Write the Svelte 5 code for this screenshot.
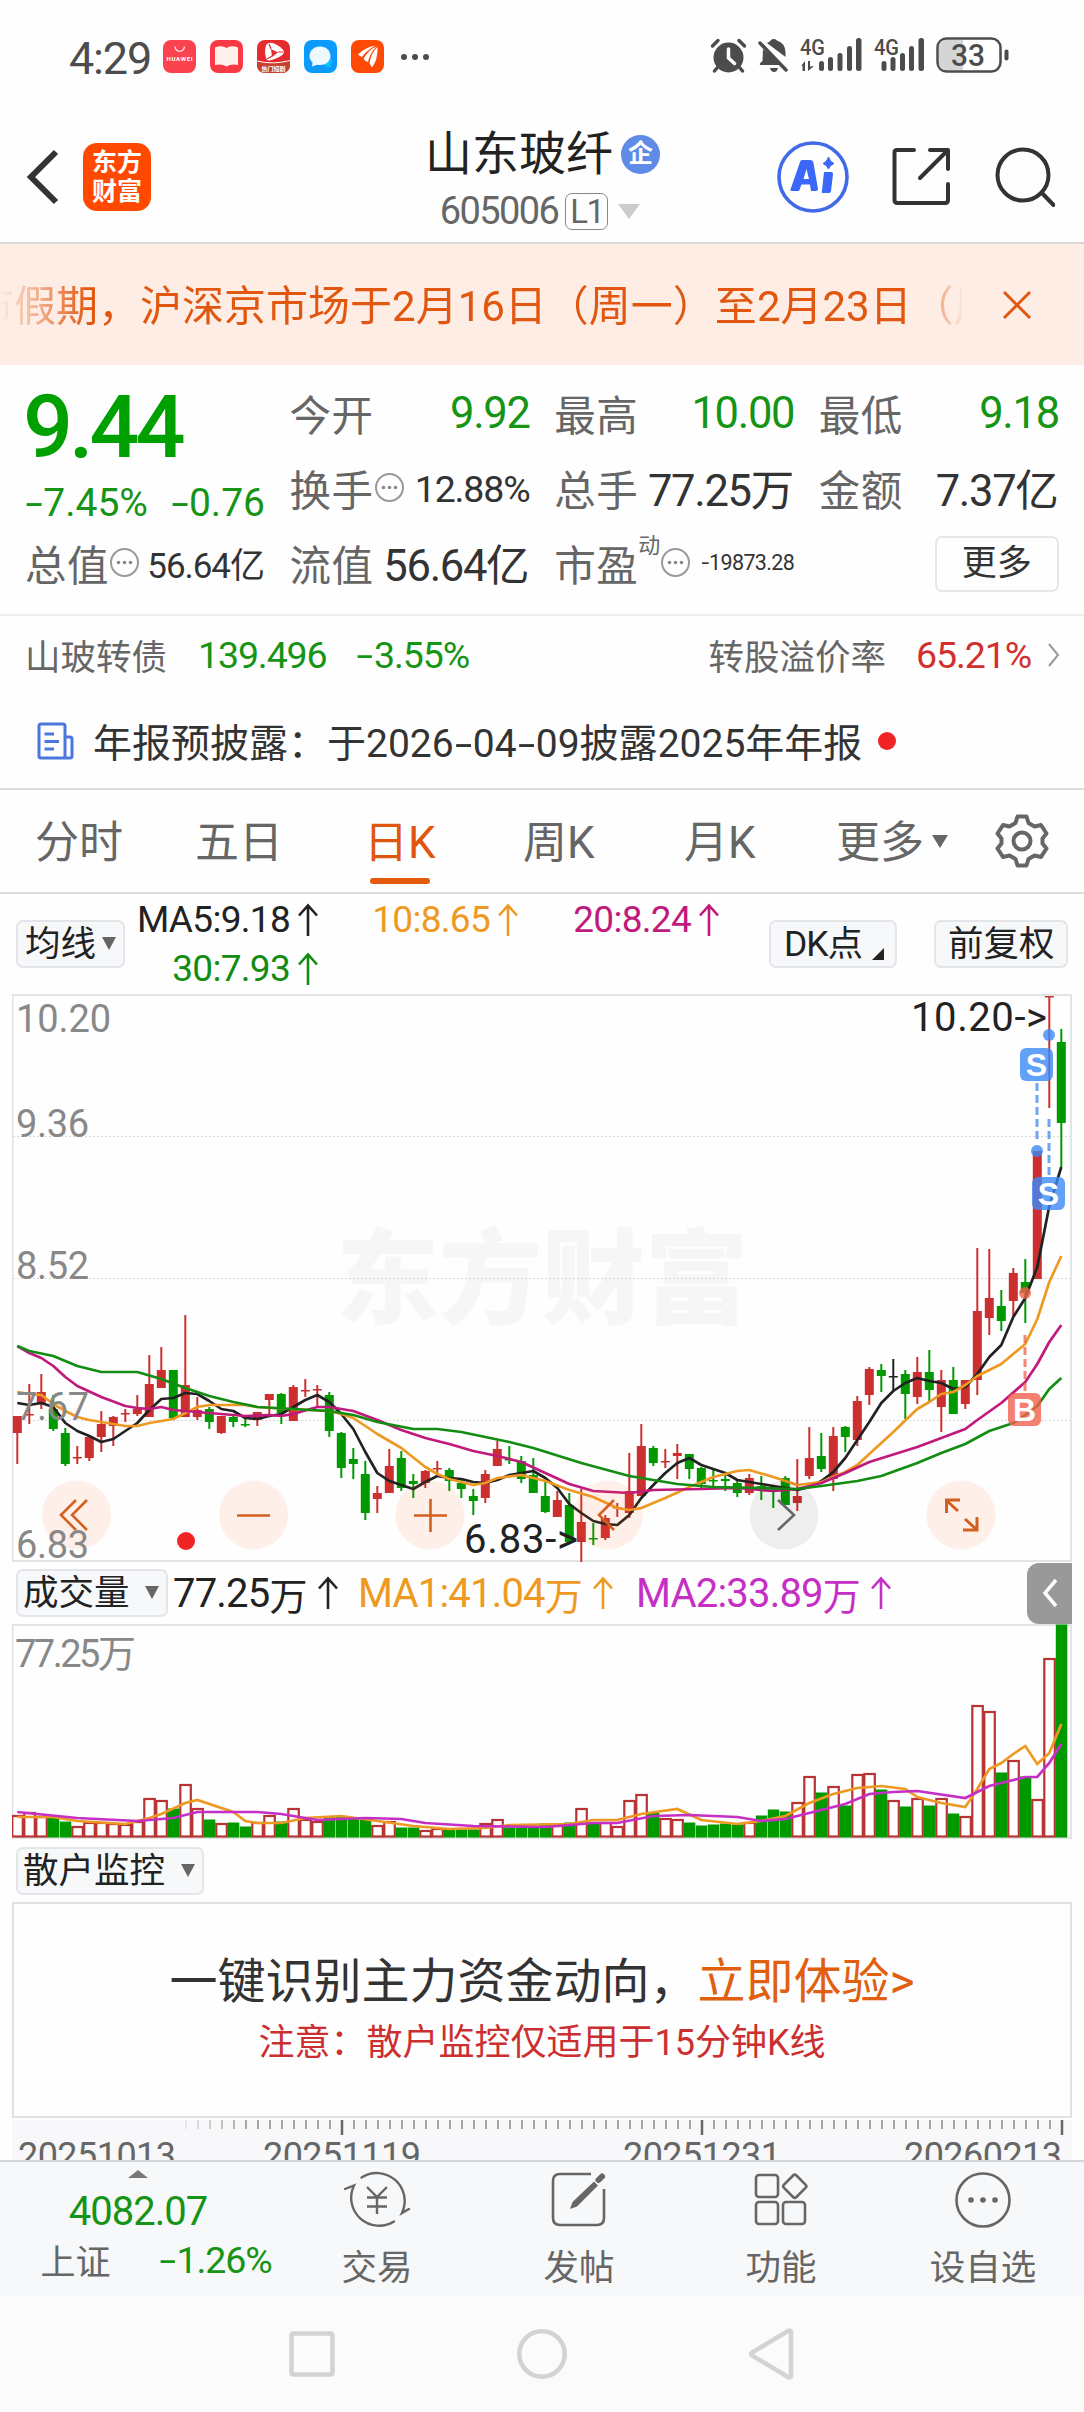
<script lang="ts">
  type Candle = [string, number, number, number, number, number];
  type Point = [number, number];

  const COLORS: Record<string, string> = { r: '#cc2f2f', g: '#009a00', k: '#222' };

  // colour, high, body top, body bottom, low, volume (all in chart pixels)
  const candles: Candle[] = [
    ['r', 422, 422, 439, 470, 22], ['r', 390, 420, 421, 430, 25], ['r', 380, 398, 409, 415, 21], ['g', 401, 415, 435, 437, 20],
    ['g', 434, 439, 470, 472, 16], ['r', 452, 463, 464, 470, 11], ['r', 443, 443, 464, 467, 15], ['r', 417, 430, 443, 458, 15],
    ['r', 422, 423, 432, 452, 14], ['r', 415, 419, 420, 428, 13], ['r', 401, 415, 420, 422, 16], ['r', 361, 390, 423, 423, 39],
    ['r', 353, 376, 394, 394, 37], ['g', 376, 376, 424, 424, 29], ['r', 321, 391, 423, 423, 53], ['r', 403, 416, 423, 426, 29],
    ['g', 413, 415, 428, 435, 18], ['r', 422, 422, 439, 440, 14], ['g', 422, 423, 428, 433, 15], ['g', 425, 430, 431, 433, 11],
    ['r', 418, 418, 426, 432, 15], ['r', 400, 400, 406, 422, 22], ['g', 399, 400, 419, 430, 16], ['r', 391, 393, 427, 427, 29],
    ['r', 385, 396, 397, 403, 18], ['r', 391, 395, 396, 413, 16], ['g', 398, 401, 437, 443, 21], ['g', 438, 439, 474, 484, 21],
    ['g', 454, 465, 470, 485, 19], ['g', 467, 480, 519, 526, 19], ['r', 492, 499, 505, 519, 12], ['r', 455, 472, 499, 499, 16],
    ['g', 457, 464, 494, 497, 10], ['g', 480, 487, 490, 504, 10], ['r', 476, 477, 489, 494, 7], ['r', 467, 474, 475, 479, 9],
    ['g', 474, 476, 487, 497, 9], ['g', 486, 489, 495, 504, 8], ['g', 495, 502, 507, 521, 8], ['r', 476, 480, 504, 509, 14],
    ['r', 447, 455, 472, 472, 18], ['g', 452, 465, 466, 470, 10], ['g', 462, 467, 485, 489, 10], ['g', 464, 481, 499, 499, 10],
    ['g', 486, 502, 518, 519, 14], ['r', 497, 506, 523, 523, 12], ['g', 499, 511, 548, 548, 15], ['r', 495, 528, 548, 568, 29],
    ['g', 529, 544, 545, 551, 14], ['r', 521, 524, 544, 546, 15], ['r', 509, 513, 514, 523, 11], ['r', 459, 497, 519, 524, 37],
    ['r', 430, 452, 502, 502, 43], ['g', 452, 454, 469, 472, 25], ['r', 455, 467, 468, 474, 19], ['r', 450, 459, 462, 485, 18],
    ['g', 460, 460, 475, 485, 15], ['g', 473, 474, 490, 495, 12], ['g', 474, 486, 487, 495, 13], ['g', 480, 485, 487, 497, 14],
    ['g', 486, 489, 499, 503, 13], ['r', 480, 484, 499, 501, 15], ['g', 482, 492, 493, 506, 22], ['g', 491, 493, 494, 514, 28],
    ['g', 482, 484, 511, 511, 26], ['r', 465, 502, 509, 517, 35], ['r', 433, 464, 482, 485, 61], ['g', 439, 462, 475, 478, 45],
    ['r', 433, 442, 485, 497, 51], ['g', 432, 433, 443, 458, 32], ['r', 402, 407, 446, 452, 63], ['r', 373, 375, 401, 411, 64],
    ['g', 370, 376, 382, 398, 48], ['k', 365, 382, 383, 397, 37], ['g', 376, 380, 400, 425, 31], ['r', 363, 378, 403, 410, 39],
    ['g', 356, 378, 396, 407, 32], ['r', 376, 386, 413, 438, 39], ['g', 373, 386, 420, 420, 24], ['r', 386, 386, 410, 415, 21],
    ['r', 254, 317, 386, 401, 132], ['r', 255, 304, 324, 341, 126], ['g', 296, 312, 327, 337, 65], ['r', 274, 279, 307, 322, 77],
    ['g', 265, 288, 299, 329, 61], ['r', 157, 157, 285, 285, 38], ['r', 2, 2, 3, 114, 179], ['g', 35, 48, 129, 173, 213],
  ];

  const ma5 = [
    409, 411, 409, 413, 429, 437, 442, 448, 445, 437, 429, 416, 405, 404, 399, 400, 407, 415, 417, 424, 425, 422,
    420, 413, 406, 401, 408, 420, 435, 458, 479, 487, 491, 495, 488, 482, 484, 485, 488, 489, 486, 481, 479, 477,
    484, 494, 510, 519, 527, 530, 531, 521, 504, 491, 479, 469, 464, 471, 475, 479, 486, 488, 490, 492, 494, 496,
    493, 487, 478, 464, 446, 428, 409, 397, 389, 384, 387, 389, 395, 393, 380, 363, 351, 323, 304, 273, 212, 173,
  ].map((y, i): Point => [i, y]);
  const ma10: Point[] = [
    [0, 398], [1, 400], [2, 401], [3, 410], [4, 417], [5, 423], [6, 426], [8, 430], [9, 432], [10, 432], [11, 429], [13, 425],
    [14, 419], [15, 413], [16, 411], [19, 411], [20, 413], [24, 416], [26, 417], [27, 420], [28, 424], [30, 440], [32, 454],
    [34, 473], [35, 480], [36, 485], [38, 491], [39, 489], [40, 484], [42, 481], [44, 487], [46, 496], [48, 503], [50, 514],
    [51, 516], [52, 514], [54, 504], [56, 493], [58, 483], [60, 477], [61, 476], [63, 483], [65, 491], [67, 488], [69, 478],
    [70, 471], [71, 460], [73, 438], [75, 415], [76, 408], [77, 400], [78, 398], [79, 391], [80, 382], [82, 370], [84, 350],
    [85, 325], [86, 288], [87, 262],
  ];
  const ma20: Point[] = [
    [0, 352], [1, 359], [2, 364], [3, 372], [4, 383], [5, 392], [7, 403], [9, 412], [10, 414], [11, 415], [12, 413], [13, 416],
    [17, 420], [19, 422], [21, 421], [22, 422], [23, 420], [25, 413], [26, 413], [28, 417], [30, 426], [32, 436], [34, 444],
    [36, 450], [38, 457], [40, 462], [42, 468], [44, 479], [46, 490], [48, 497], [51, 499], [53, 496], [57, 495], [60, 494],
    [63, 497], [65, 495], [67, 489], [69, 479], [71, 468], [75, 453], [77, 444], [79, 435], [80, 426], [82, 409], [84, 388],
    [85, 370], [86, 348], [87, 331],
  ];
  const ma30: Point[] = [
    [0, 352], [1, 357], [3, 362], [5, 372], [7, 378], [10, 378], [12, 385], [14, 394], [16, 402], [18, 408], [20, 413], [23, 415],
    [26, 417], [28, 421], [30, 428], [33, 435], [35, 435], [37, 438], [39, 443], [41, 448], [43, 454], [47, 469], [51, 482],
    [55, 490], [58, 493], [65, 495], [67, 492], [70, 487], [72, 482], [75, 469], [77, 459], [79, 450], [81, 437], [83, 429],
    [84, 421], [85, 412], [86, 395], [87, 384],
  ];
  const volMa1: Point[] = [
    [0, 193], [3, 193], [5, 197], [9, 200], [11, 194], [12, 190], [14, 179], [15, 176], [18, 188], [19, 197], [20, 199], [22, 199],
    [24, 194], [27, 192], [30, 197], [33, 202], [36, 205], [39, 204], [41, 201], [46, 200], [48, 196], [50, 196], [52, 190],
    [55, 185], [57, 196], [60, 200], [62, 197], [64, 192], [66, 179], [68, 170], [70, 164], [72, 162], [74, 165], [75, 173],
    [77, 179], [79, 183], [80, 165], [81, 145], [82, 139], [83, 130], [84, 122], [85, 140], [86, 129], [87, 100],
  ];
  const volMa2: Point[] = [
    [0, 188], [5, 194], [10, 197], [13, 194], [15, 188], [20, 188], [22, 190], [25, 196], [29, 194], [32, 195], [34, 199],
    [38, 202], [44, 203], [48, 199], [50, 199], [53, 192], [56, 191], [60, 193], [62, 197], [64, 195], [66, 189], [69, 180],
    [71, 170], [73, 168], [75, 167], [79, 174], [81, 162], [82, 159], [84, 153], [85, 153], [86, 139], [87, 120],
  ];

  const cx = (i: number) => 5.3 + i * 12;
  const line = (pts: Point[]) => pts.map(([i, y]) => `${cx(i)},${y}`).join(' ');

  const axis = [
    { label: '10.20', y: 38, w: 95 },
    { label: '9.36', y: 143, w: 73 },
    { label: '8.52', y: 285, w: 73 },
    { label: '7.67', y: 426, w: 73 },
    { label: '6.83', y: 564, w: 73 },
  ];
  const marks = [
    { t: 'S', x: 1008, y: 54, c: '#3c8af7', dotX: 1037, dotY: 41, dx: 1025, d1: 89, d2: 147 },
    { t: 'S', x: 1020, y: 183, c: '#3c8af7', dotX: 1025, dotY: 157, dx: 1037, d1: 125, d2: 183 },
    { t: 'B', x: 996, y: 399, c: '#f0604c', dotX: 1013, dotY: 299, dx: 1013, d1: 341, d2: 398 },
  ];
  const ticks = Array.from({ length: 74 }, (_, k) => 174 + k * 12);
  const tabs = [
    { label: '分时', x: 35 }, { label: '五日', x: 195 }, { label: '日K', x: 364 },
    { label: '周K', x: 523 }, { label: '月K', x: 684 }, { label: '更多', x: 836 },
  ];
  let active = $state('日K');

  // digits and hyphens get their own spacing next to Chinese text
  const split = (s: string) => s.split(/(-|[0-9A-Z.:%+]+)/).filter(Boolean);
  const isNum = (s: string) => /^[0-9A-Z.:%+]/.test(s);
</script>

{#snippet mix(s: string)}{#each split(s) as part}{#if part === '-'}<span class="hy">-</span>{:else if isNum(part)}<span class="num">{part}</span>{:else}{part}{/if}{/each}{/snippet}

{#snippet info()}
  <svg class="info" width="32" height="32" viewBox="0 0 32 32">
    <circle cx="15.500" cy="14.500" r="13.500" fill="none" stroke="#999" stroke-width="2" />
    <circle cx="9.500" cy="14.500" r="1.800" fill="#888" /><circle cx="15.500" cy="14.500" r="1.800" fill="#888" /><circle cx="21.500" cy="14.500" r="1.800" fill="#888" />
  </svg>
{/snippet}

{#snippet up()}<svg class="up" width="20" height="34" viewBox="0 0 20 34"><path d="M10 33V3M1 12.5L10 2.5L19 12.5" fill="none" stroke="currentColor" stroke-width="2.6" /></svg>{/snippet}

<div class="phone">
  <div class="status">
    <span class="clock">4:29</span>
    <div class="apps">
      <svg width="33" height="33" viewBox="0 0 33 33">
        <rect width="33" height="33" rx="8" fill="#fb4350" />
        <path d="M12 6.5a4.7 4.7 0 0 0 9.4 0" fill="none" stroke="#fff" stroke-width="1.1" />
        <text x="16.5" y="21" font-size="6" font-weight="700" fill="#fff" text-anchor="middle" textLength="26">HUAWEI</text>
      </svg>
      <svg width="33" height="33" viewBox="0 0 33 33">
        <rect width="33" height="33" rx="8" fill="#f93a44" />
        <path d="M5 7.5Q12 5 16.5 8Q21 5 28 7.5V25Q21 23.500 16.500 26.500Q12 23.500 5 25Z" fill="#fff2ec" />
      </svg>
      <svg width="33" height="33" viewBox="0 0 33 33">
        <rect width="33" height="33" rx="8" fill="#e62b2f" />
        <path d="M9 5Q12 1.500 17 3.500Q25 7 27 11.500Q27 15 20 18Q12 22 9.500 19.500Q7 13 9 5Z" fill="#fff" />
        <path d="M14 9L21 12.500L15 17Z" fill="#e62b2f" /><path d="M12 4L14 9M26 12H21M10 19L15 16" stroke="#e62b2f" stroke-width="1.2" />
        <path d="M0 21.500Q16 25 33 21V26Q32 33 25 33H8Q1 33 0 26Z" fill="#c9402f" /><path d="M0 21Q16 25 33 20.500" fill="none" stroke="#fff" stroke-width="1" />
        <text x="16.500" y="30.500" font-size="6" font-weight="700" fill="#fff" text-anchor="middle">热门短剧</text>
      </svg>
      <svg width="33" height="33" viewBox="0 0 33 33">
        <rect width="33" height="33" rx="8" fill="#0c9bfb" />
        <path d="M19 23Q24 24 28 18Q28 23 26 24L27 27Q22 28 19 23Z" fill="#00c9f7" />
        <path d="M16 6.500C9.500 6.500 5.500 11 5.500 16C5.500 19 7 21 8.500 22.500L8 26.500L13 24.700C21 26.500 26.500 21.500 26.500 16C26.500 10.500 22 6.500 16 6.500Z" fill="#eef8ff" />
      </svg>
      <svg width="33" height="33" viewBox="0 0 33 33">
        <rect width="33" height="33" rx="8" fill="#ff4a05" />
        <path d="M7 14.500Q16 6 24 6Q16 10 11 17Q9 16 7 14.500ZM12.500 19Q17 10 25.500 6.500Q19 13 17 22Q14 21 12.500 19ZM18.500 23Q20 13 26.500 7Q27 20 21 27.500Q20 26 18.500 23Z" fill="#fff" />
      </svg>
    </div>
    <span class="dots"><i></i><i></i><i></i></span>
    <svg class="sys" width="302" height="40" viewBox="0 0 302 40">
      <g fill="#4c4c4c">
        <circle cx="18.500" cy="20.500" r="15" />
        <path d="M2.500 9L8 3.500M34.500 9L29 3.500M7 31L4.500 34M30 31L32.500 34" stroke="#4c4c4c" stroke-width="3.500" stroke-linecap="round" />
        <path d="M18.500 12V21L24.500 26.500" fill="none" stroke="#fff" stroke-width="3.500" stroke-linecap="round" />
        <path d="M57 6Q60 5 61 3Q64 1 67 3.500Q75 6 75.500 15V20ZM53 12L72 28H50Q49 26.500 52.500 24Z" />
        <path d="M50 6L76 33" stroke="#4c4c4c" stroke-width="3.500" stroke-linecap="round" />
        <path d="M60 31H68Q67 35 64 35Q61 35 60 31Z" />
        <rect x="109" y="24" width="5" height="10" rx="2.500" /><rect x="118" y="20" width="5" height="14" rx="2.500" /><rect x="127.500" y="16" width="5" height="18" rx="2.500" /><rect x="137" y="9" width="5" height="25" rx="2.500" /><rect x="146" y="1" width="5.500" height="33" rx="2.500" />
        <rect x="171.500" y="24" width="5" height="10" rx="2.500" /><rect x="180.500" y="20" width="5" height="14" rx="2.500" /><rect x="190" y="16" width="5" height="18" rx="2.500" /><rect x="199" y="9" width="5" height="25" rx="2.500" /><rect x="208.500" y="1" width="5.500" height="33" rx="2.500" />
        <path d="M91 29L95 24V34H92.500V28.500ZM98 24H100V29.500L104 29L98 34Z" />
        <text x="90" y="17.500" font-size="22" font-weight="500" textLength="25" lengthAdjust="spacingAndGlyphs">4G</text>
        <text x="164" y="17.500" font-size="22" font-weight="500" textLength="25" lengthAdjust="spacingAndGlyphs">4G</text>
        <rect x="227.500" y="1.500" width="63" height="33" rx="9" fill="#fff" stroke="#4c4c4c" stroke-width="2.500" />
        <path d="M229 10Q229 3 236 3H253V33H236Q229 33 229 26Z" fill="#d5d5d5" />
        <text x="241" y="29" font-size="32" font-weight="500" textLength="34" lengthAdjust="spacingAndGlyphs">33</text>
        <rect x="294.500" y="12.500" width="4" height="11" rx="2" />
      </g>
    </svg>
  </div>

  <header>
    <div class="left">
      <svg width="34" height="58" viewBox="0 0 34 58"><path d="M30 4L5 29L30 54" fill="none" stroke="#333" stroke-width="6" /></svg>
      <div class="logo"><span>东方</span><span>财富</span></div>
    </div>
    <div class="title">
      <div class="name">山东玻纤<span class="ent">企</span></div>
      <div class="code"><span>605006</span><b>L1</b><i></i></div>
    </div>
    <div class="tools">
      <svg width="72" height="72" viewBox="0 0 72 72">
        <circle cx="36" cy="36" r="34" fill="none" stroke="#4169e8" stroke-width="3.600" />
        <path d="M25 19H33Q36 19 36.500 22L41 48Q41 50 39 50H34L33 43.500H24.500L22 50H14.500Q12.500 49.500 14 47L23 21Q23.500 19 25 19ZM29.500 28L26.500 38H32Z" fill="#3b68fa" fill-rule="evenodd" />
        <path d="M47 31H54.500Q56 31 56 33L54 50Q54 52 52 52H45Q44.500 51 45 49.500Z" fill="#3b68fa" />
        <path d="M51.500 16Q53 21 57 22.500Q53 24 51.500 28Q50 24 46 22.500Q50 21 51.500 16Z" fill="#3b68fa" stroke="#3b68fa" />
      </svg>
      <svg width="60" height="60" viewBox="0 0 60 60" fill="none" stroke="#333" stroke-width="4" stroke-linecap="round" stroke-linejoin="round">
        <path d="M22 3H5Q2.500 3 2.500 5.500V53Q2.500 56 5.500 56H53Q56 56 56 53V37M38 3H56V22M56 3L28 31" />
      </svg>
      <svg width="60" height="60" viewBox="0 0 60 60" fill="none" stroke="#333" stroke-width="4" stroke-linecap="round">
        <circle cx="28" cy="28" r="25.500" /><path d="M47 46L58.500 58" />
      </svg>
    </div>
  </header>

  <div class="banner">
    <div class="marquee"><div class="run">市假期，沪深京市场于{@render mix('2月16日（周一）至2月23日（周一）')}</div></div>
    <svg width="30" height="30" viewBox="0 0 30 30"><path d="M2 2L28 28M28 2L2 28" stroke="#e2570f" stroke-width="3" /></svg>
  </div>

  <section class="quote">
    <div class="price">
      <div class="last">9.44</div>
      <div class="chg"><span>{@render mix('-7.45%')}</span><span>{@render mix('-0.76')}</span></div>
    </div>
    <div class="cell"><label>今开</label><b class="num g">9.92</b></div>
    <div class="cell"><label>最高</label><b class="num g">10.00</b></div>
    <div class="cell"><label>最低</label><b class="num g">9.18</b></div>
    <div class="cell"><label>换手</label>{@render info()}<b class="num m">12.88%</b></div>
    <div class="cell"><label>总手</label><b>{@render mix('77.25万')}</b></div>
    <div class="cell"><label>金额</label><b>{@render mix('7.37亿')}</b></div>
    <div class="cell"><label>总值</label>{@render info()}<b class="s">{@render mix('56.64亿')}</b></div>
    <div class="cell"><label>流值</label><b>{@render mix('56.64亿')}</b></div>
    <div class="cell"><label>市盈</label><sup>动</sup>{@render info()}<b class="xs">{@render mix('-19873.28')}</b></div>
    <div class="cell end"><button class="more">更多</button></div>
  </section>

  <section class="bond">
    <span class="lbl">山玻转债</span><span class="num g v1">139.496</span><span class="g v2">{@render mix('-3.55%')}</span>
    <span class="lbl prem">转股溢价率</span><span class="num red v3">65.21%</span>
    <svg width="14" height="26" viewBox="0 0 14 26"><path d="M2 2L11 13L2 24" fill="none" stroke="#999" stroke-width="2" /></svg>
  </section>

  <section class="notice">
    <svg width="38" height="38" viewBox="0 0 38 38" fill="none" stroke="#4a76dd" stroke-width="3">
      <path d="M28 36V4Q28 2 26 2H4Q2 2 2 4V34Q2 36 4 36H33Q35 36 35 34V17Q35 15 33 15H28M7.500 12H17M7.500 19.500H22M7.500 27H17" />
    </svg>
    <span class="txt">{@render mix('年报预披露：于2026-04-09披露2025年年报')}</span>
    <i></i>
  </section>

  <nav class="tabs">
    {#each tabs as t, i}
      <button class:on={active === t.label} style:margin-left="{i === 0 ? t.x : 0}px" style:width="{(tabs[i + 1]?.x ?? 994) - t.x}px" onclick={() => (active = t.label)}>
        <span>{t.label}</span>{#if i === 5}<i class="tri"></i>{/if}
      </button>
    {/each}
    <svg width="56" height="56" viewBox="0 0 56 56" fill="none" stroke="#666" stroke-width="4" stroke-linejoin="round">
      <path d="M23.500 3.500H32.500L34.500 10L40.500 13.500L47 12L52.500 20.500L48.500 25.500V30.500L52.500 35.500L47 44L40.500 42.500L34.500 46L32.500 52.500H23.500L21.500 46L15.500 42.500L9 44L3.500 35.500L7.500 30.500V25.500L3.500 20.500L9 12L15.500 13.500L21.500 10Z" />
      <circle cx="28" cy="28" r="8.500" />
    </svg>
  </nav>

  <section class="mabar">
    <button class="chip ma">均线<i class="tri"></i></button>
    <div class="mas">
      <span class="m1">MA5:9.18{@render up()}</span>
      <span class="m2">10:8.65{@render up()}</span>
      <span class="m3">20:8.24{@render up()}</span>
      <span class="m4">30:7.93{@render up()}</span>
    </div>
    <button class="chip dk">{@render mix('DK点')}<i class="corner"></i></button>
    <button class="chip fq">前复权</button>
  </section>

  <svg class="chart" width="1060" height="568" viewBox="0 0 1060 568">
    <text class="mark" x="530" y="322" text-anchor="middle">东方财富</text>
    <rect x="0.500" y="1" width="1058.500" height="566" fill="none" stroke="#e2e2e2" stroke-width="1.800" />
    {#each [142.5, 284.5, 426.5] as y}
      <line x1="1" x2="1058" y1={y} y2={y} stroke="#d8d8d8" stroke-width="1" stroke-dasharray="2 2" />
    {/each}
    {#each candles as [c, hi, top, bot, lo], i}
      <line x1={cx(i)} x2={cx(i)} y1={hi} y2={lo} stroke={COLORS[c]} stroke-width="2" />
      <rect x={cx(i) - 4.5} y={top} width="9" height={Math.max(bot - top, 1.5)} fill={COLORS[c]} />
    {/each}
    <g fill="none" stroke-width="2.700" stroke-linejoin="round">
      <polyline points={line(ma5)} stroke="#222" />
      <polyline points={line(ma10)} stroke="#ee9a22" />
      <polyline points={line(ma20)} stroke="#c01a7c" />
      <polyline points={line(ma30)} stroke="#128c12" />
    </g>
    {#each [64.5, 241.6, 418, 596, 772, 949] as x, i}
      <circle cx={x} cy="521" r="34.500" fill={i === 4 ? '#00000010' : '#ff6a2018'} />
    {/each}
    <g fill="none" stroke="#d4601f" stroke-width="2.600">
      <path d="M64 506L49 521L64 536M75 506L60 521L75 536" />
      <path d="M225 521.500H258" /><path d="M402 521.500H435M418.500 505V538" />
      <path d="M602 506L587 521L602 536" />
      <path d="M766 506L782 521L766 536" stroke="#666" />
      <path d="M934.500 519V506H948M935 507L946 517M965 523V536H951M964 535L953 525" stroke-width="3" />
    </g>
    <circle cx="174" cy="547" r="9" fill="#f02424" />
    {#each axis as a}
      <text x="4" y={a.y} class="ax" textLength={a.w}>{a.label}</text>
    {/each}
    <text x="899" y="37" class="tag" textLength="136">10.20-&gt;</text>
    <text x="452" y="559" class="tag" textLength="114">6.83-&gt;</text>
    {#each marks as m}
      <line x1={m.dx} x2={m.dx} y1={m.d1} y2={m.d2} stroke={m.c} stroke-width="3" stroke-dasharray="8 4" opacity="0.75" />
      <circle cx={m.dotX} cy={m.dotY} r="6" fill={m.c} opacity="0.8" />
      <rect x={m.x} y={m.y} width="33" height="33" rx="6" fill={m.c} opacity="0.8" />
      <text x={m.x + 16.5} y={m.y + 28} class="sb" text-anchor="middle">{m.t}</text>
    {/each}
  </svg>

  <section class="volbar">
    <button class="chip vol">成交量<i class="tri"></i></button>
    <span class="v0">{@render mix('77.25万')}{@render up()}</span>
    <span class="va">{@render mix('MA1:41.04万')}{@render up()}</span>
    <span class="vb">{@render mix('MA2:33.89万')}{@render up()}</span>
    <button class="fold" aria-label="收起">
      <svg width="18" height="30" viewBox="0 0 18 30"><path d="M15 2L4 15L15 28" fill="none" stroke="#fff" stroke-width="3.500" /></svg>
    </button>
  </section>

  <svg class="chart" width="1060" height="215" viewBox="0 0 1060 215">
    <rect x="0.500" y="1" width="1058.500" height="213" fill="none" stroke="#e2e2e2" stroke-width="1.800" />
    <text x="3" y="43" class="ax" textLength="121">77.25万</text>
    {#each candles as [c, , , , , v], i}
      {#if c === 'g'}
        <rect x={cx(i) - 5.5} y={213.5 - v} width="11.500" height={v} fill="#009a00" />
      {:else}
        <rect x={cx(i) - 5} y={214 - v} width="10.500" height={v - 1.5} fill="#fff" stroke="#b83434" stroke-width="2.200" />
      {/if}
    {/each}
    <polyline points={line(volMa1)} fill="none" stroke="#ee9a22" stroke-width="2.700" />
    <polyline points={line(volMa2)} fill="none" stroke="#c62fc6" stroke-width="2.700" />
  </svg>

  <section class="monitor"><button class="chip mon">散户监控<i class="tri"></i></button></section>

  <section class="promo">
    <p class="lead">一键识别主力资金动向，<a href="#try">立即体验&gt;</a></p>
    <p class="warn">{@render mix('注意：散户监控仅适用于15分钟K线')}</p>
  </section>

  <div class="ruler">
    <svg width="1060" height="40" viewBox="0 0 1060 40">
      {#each ticks as x, k}
        {@const big = (x - 330) % 360 === 0}
        <line x1={x} x2={x} y1="0" y2={big ? 15 : 9} stroke={big ? '#666' : '#888'} stroke-width={big ? 2.5 : 1.5} opacity={Math.min(1, 0.2 + k * 0.15)} />
      {/each}
      <text x="6" y="48" textLength="158">20251013</text>
      <text x="251" y="48" textLength="158">20251119</text>
      <text x="611" y="48" textLength="158">20251231</text>
      <text x="892" y="48" textLength="158">20260213</text>
    </svg>
  </div>

  <footer>
    <div class="index">
      <i></i>
      <b>4082.07</b>
      <div><span>上证</span><em>{@render mix('-1.26%')}</em></div>
    </div>
    <div class="item">
      <svg width="68" height="60" viewBox="0 0 68 60" fill="none" stroke="#666" stroke-width="2.400" stroke-linecap="round">
        <path d="M18.500 7.500A28 28 0 0 1 59 43L66 39M2 19L11 15.500A28 28 0 0 0 51 51.500" />
        <path d="M24 17L34 27L44 17M24 27.500H44M24 36.500H44M34 27V44" stroke-linecap="butt" />
      </svg>
      <span>交易</span>
    </div>
    <div class="item">
      <svg width="60" height="60" viewBox="0 0 60 60" fill="none" stroke="#666" stroke-width="2.600">
        <path d="M42 4H11Q4 4 4 11V48Q4 55 11 55H48Q55 55 55 48V19" />
        <path d="M21 39L23.500 32L45 11.500L49 15.500L28 36.500Z" fill="#666" stroke="none" /><path d="M49.500 10L53 6.500" stroke-width="6" stroke-linecap="round" />
      </svg>
      <span>发帖</span>
    </div>
    <div class="item">
      <svg width="60" height="60" viewBox="0 0 60 60" fill="none" stroke="#666" stroke-width="2.600">
        <rect x="5" y="5" width="22" height="22" rx="3" /><rect x="5" y="32" width="22" height="22" rx="3" /><rect x="32" y="32" width="22" height="22" rx="3" />
        <rect x="35" y="7.500" width="17.500" height="17.500" rx="2" transform="rotate(45 43.750 16.250)" />
      </svg>
      <span>功能</span>
    </div>
    <div class="item">
      <svg width="60" height="60" viewBox="0 0 60 60">
        <circle cx="30" cy="30" r="26.500" fill="none" stroke="#666" stroke-width="2.600" />
        <circle cx="18" cy="30" r="2.800" fill="#666" /><circle cx="30" cy="30" r="2.800" fill="#666" /><circle cx="42" cy="30" r="2.800" fill="#666" />
      </svg>
      <span>设自选</span>
    </div>
  </footer>

  <div class="sysnav">
    <svg width="50" height="50" viewBox="0 0 50 50"><rect x="4.500" y="4.500" width="41" height="41" rx="2" /></svg>
    <svg width="50" height="50" viewBox="0 0 50 50"><circle cx="25" cy="25" r="22.700" /></svg>
    <svg width="50" height="54" viewBox="0 0 50 54"><path d="M44 4.500V49.500Q43 51 41 50L5 28.500Q3 27 5 25.500L41 4Q43 3 44 4.500Z" /></svg>
  </div>
</div>

<style>
  :global(body) { background: #fdfdfe; }
  .phone {
    width: 1084px; height: 2412px; overflow: hidden;
    display: flex; flex-direction: column;
    background: #fefefe; color: #333;
    font-family: Roboto, 'Noto Sans CJK SC', sans-serif;
  }
  .phone > * { flex-shrink: 0; box-sizing: border-box; }
  button { font: inherit; color: inherit; background: none; border: none; padding: 0; }
  svg { display: block; }
  b, em, i { font-weight: 400; font-style: normal; }
  .num { letter-spacing: -.03em; }
  .hy { display: inline-block; width: .47em; text-align: center; transform: scaleX(1.6); }
  .g { color: #159415 !important; }
  .red { color: #d32f2f; }

  .status { height: 112px; display: flex; align-items: center; padding: 1px 72px 0 69px; }
  .status svg { overflow: visible; }
  .clock { font-size: 45px; letter-spacing: -1.2px; width: 94px; color: #4c4c4c; line-height: 1; padding-top: 3px; box-sizing: border-box; }
  .apps { display: flex; gap: 14px; }
  .dots { display: flex; gap: 5px; margin-left: 17px; }
  .dots i { width: 6px; height: 6px; border-radius: 50%; background: #4c4c4c; }
  .sys { margin-left: auto; }

  header {
    height: 132px; padding: 0 29px 0 26px; border-bottom: 2px solid #d8d8dc;
    display: grid; grid-template-columns: 1fr 300px 1fr; align-items: center;
  }
  .left { display: flex; align-items: center; gap: 23px; }
  .logo {
    width: 68px; height: 68px; border-radius: 14px; background: #ff4800; color: #fff;
    display: flex; flex-direction: column; align-items: center; justify-content: center;
    font-size: 25px; line-height: 29px; font-weight: 700;
  }
  .title { display: flex; flex-direction: column; align-items: center; margin-top: 1px; }
  .name { display: flex; align-items: center; font-size: 47px; line-height: 66px; color: #222; margin-left: 4px; }
  .ent {
    width: 39px; height: 39px; border-radius: 50%; margin-left: 8px;
    background: #5f8be6; color: #fff; font-size: 25px; line-height: 37px; font-weight: 700; text-align: center;
  }
  .code { display: flex; align-items: center; font-size: 38px; line-height: 46px; color: #666; letter-spacing: -1.600px; margin: 1px 1px 0 0; }
  .code b { border: 1.500px solid #888; border-radius: 7px; height: 35px; line-height: 35px; font-size: 33px; padding: 0 4px 0 4px; margin-left: 7px; }
  .code i { border: 11px solid transparent; border-top: 15px solid #ccc; border-bottom: 0; margin-left: 10px; }
  .tools { display: flex; align-items: center; justify-content: flex-end; gap: 43px; }

  .banner { height: 121px; background: #fdede5; display: flex; align-items: center; color: #e2570f; padding-right: 52px; justify-content: space-between; }
  .marquee { width: 962px; overflow: hidden; mask-image: linear-gradient(90deg, transparent, #000 90px, #000 905px, transparent 965px); }
  .run { font-size: 42px; white-space: nowrap; margin-left: -28px; padding-bottom: 5px; }
  .run .num { letter-spacing: 0; }

  .quote {
    height: 251px; padding: 11px 25px 0; border-bottom: 2px solid #eee;
    display: grid; grid-template-columns: repeat(4, 240px); grid-template-rows: repeat(3, 75px); column-gap: 24.600px;
  }
  .price { grid-row: span 2; color: #00a000; }
  .last { font-size: 88px; font-weight: 500; line-height: 102px; letter-spacing: -4px; margin-left: -2px; }
  .chg { display: flex; justify-content: space-between; font-size: 39px; line-height: 50px; color: #159415; }
  .chg .num { letter-spacing: 0; }
  .cell { display: flex; align-items: center; white-space: nowrap; }
  .cell label { font-size: 41.500px; color: #666; letter-spacing: .500px; padding-bottom: 1px; }
  .cell b { margin-left: auto; font-size: 43.500px; color: #333; }
  .cell b:not(.num) { padding-bottom: 2px; }
  .cell b.m { font-size: 37.500px; }
  .cell b.s { font-size: 35px; }
  .cell b.xs { font-size: 21.500px; }
  .xs .hy { width: .4em; transform: scaleX(1.3); }
  .cell sup { font-size: 22px; color: #666; align-self: flex-start; line-height: 40px; }
  .info { flex-shrink: 0; }
  .end { justify-content: flex-end; }
  .more { width: 124px; height: 56px; border: 2px solid #e6e6e6; border-radius: 7px; font-size: 35px; line-height: 48px; }

  .bond { height: 78px; padding: 0 23px 0 25px; display: flex; align-items: center; font-size: 37.500px; }
  .lbl { font-size: 35.500px; color: #666; padding-bottom: 1px; }
  .v1 { margin-left: 31px; }
  .v2 { margin-left: 30px; }
  .prem { margin-left: auto; }
  .v3 { margin: 0 16px 0 30px; }

  .notice { height: 96px; border-bottom: 2px solid #ddd; padding-left: 37px; display: flex; align-items: center; font-size: 39px; }
  .txt { margin-left: 18px; white-space: nowrap; width: 769px; padding-bottom: 2px; }
  .notice .num { letter-spacing: 0; }
  .notice .hy { width: .49em; }
  .notice i { width: 18px; height: 18px; border-radius: 50%; background: #f02424; margin-left: 16px; }

  .tabs { height: 104px; border-bottom: 2px solid #ddd; display: flex; align-items: center; font-size: 44px; color: #666; }
  .tabs button { display: flex; align-items: center; height: 100%; }
  .tabs span { height: 100%; display: flex; align-items: center; position: relative; box-sizing: border-box; padding-bottom: 4px; }
  .tabs .on { color: #e0560e; }
  .tabs .on span::after { content: ''; position: absolute; left: 6px; width: 60px; bottom: 8px; height: 6px; border-radius: 3px; background: #e55a0a; }
  .tri { border: 8px solid transparent; border-top: 13px solid #666; border-bottom: 0; }
  .tabs .tri { margin-left: 8px; }

  .mabar { height: 100px; padding: 0 16px; display: flex; align-items: center; }
  .chip {
    height: 48px; box-sizing: border-box; display: flex; align-items: center; flex-shrink: 0;
    background: #f7f8fa; border: 2px solid #e4e5e8; border-radius: 7px;
    font-size: 35.500px; line-height: 40px; color: #222; padding: 0 0 1px 5px; white-space: nowrap;
  }
  .ma { width: 109px; padding-left: 7px; }
  .chip .tri { border-width: 13px 7px 0; margin-left: auto; margin-right: 7px; }
  .mas { width: 630px; display: grid; grid-template-columns: 193px 200px 200px; grid-auto-rows: 49px; align-items: center; margin-left: 14px; font-size: 37px; letter-spacing: -.700px; }
  .mas span { display: flex; align-items: center; justify-content: flex-end; white-space: nowrap; }
  .up { margin-left: 8px; flex-shrink: 0; }
  .m1 { color: #222; margin-right: 14px; }
  .m2 { color: #ee9a22; margin-right: 14px; }
  .m3 { color: #c01a7c; margin-right: 13px; }
  .m4 { color: #128c12; margin-right: 14px; }
  .dk { width: 128px; padding-left: 13px; }
  .corner { border: 6px solid #222; border-left-color: transparent; border-top-color: transparent; margin: 20px 0 0 9px; }
  .fq { width: 134px; margin-left: auto; padding-left: 12px; }

  .chart { margin-left: 12px; font-family: Roboto, 'Noto Sans CJK SC', sans-serif; }
  .mark { font-family: 'Noto Sans CJK SC', sans-serif; font-size: 103px; font-weight: 900; fill: #f6f6f6; }
  .ax { font-size: 38px; fill: #888; }
  .tag { font-size: 40px; fill: #222; }
  .sb { font: 700 32px 'Liberation Sans', sans-serif; fill: #fff; }

  .volbar { height: 62px; padding-left: 16px; display: flex; align-items: center; font-size: 38px; color: #222; }
  .volbar > span { display: flex; align-items: center; white-space: nowrap; }
  .volbar > span .num { font-size: 40px; letter-spacing: -.020em; }
  .volbar .up { margin-left: 10px; }
  .vol { width: 152px; }
  .v0 { margin-left: 5px; width: 185px; }
  .va { width: 278px; color: #ee9a22; }
  .vb { color: #c62fc6; }
  .fold { margin-left: auto; margin-right: 12px; width: 45px; height: 61px; border-radius: 12px 0 0 12px; background: #999; display: flex; align-items: center; justify-content: center; }

  .monitor { height: 63px; padding: 8px 0 0 16px; display: flex; }
  .mon { width: 188px; }

  .promo {
    height: 216px; margin: 0 12px; border: 2px solid #e2e2e2; text-align: center;
    display: flex; flex-direction: column; justify-content: center;
  }
  .promo p { margin: 0; }
  .promo .lead { font-size: 48px; line-height: 66px; white-space: nowrap; margin-top: 0; }
  .lead a { color: #e0600f; text-decoration: none; }
  .warn { font-size: 36px; line-height: 56px; color: #cc2f2f; }
  .warn .num { letter-spacing: 0; }

  .ruler { height: 42px; padding: 2px 12px 0; }
  .ruler svg { background: #f8f8fb; overflow: hidden; }
  .ruler text { font-size: 36px; fill: #666; }

  footer { height: 136px; border-top: 2px solid #d4d5d8; background: #f7f8fa; display: flex; color: #666; }
  .index { width: 276px; display: flex; flex-direction: column; align-items: center; color: #159415; }
  .index i { border: 10px solid transparent; border-bottom: 8px solid #777; border-top: 0; margin-top: 8px; }
  .index b { font-size: 40px; line-height: 44px; letter-spacing: -1px; margin-top: 12px; }
  .index div { display: flex; justify-content: space-between; align-items: center; width: 231px; line-height: 50px; margin: 1px 0 0 36px; }
  .index span { color: #666; font-size: 35px; }
  .index em span { color: #159415; font-size: 37.500px; }
  .item { width: 202px; display: flex; flex-direction: column; align-items: center; padding-top: 8px; }
  .item span { font-size: 35.500px; line-height: 50px; margin-top: 13px; }

  .sysnav { height: 116px; background: #fbfbfb; display: flex; align-items: center; justify-content: center; gap: 180px; }
  .sysnav svg { fill: none; stroke: #d3d3d3; stroke-width: 4.500; }
</style>
